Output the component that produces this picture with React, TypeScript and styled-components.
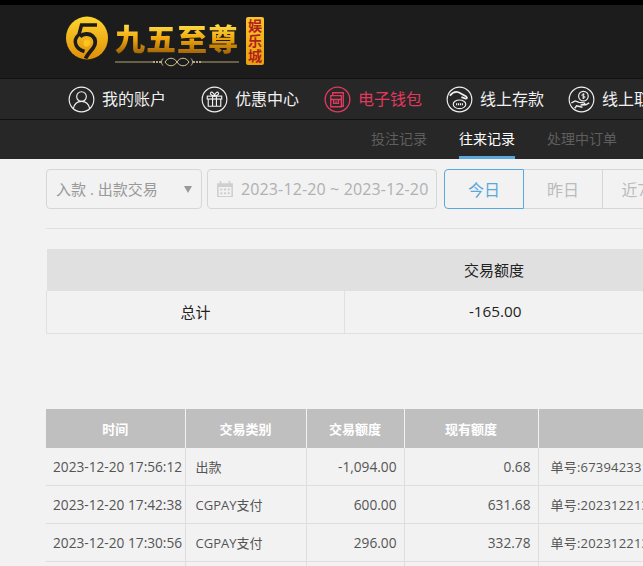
import styled, { createGlobalStyle } from "styled-components";

const GlobalStyle = createGlobalStyle`
  html, body {
    margin: 0;
    height: 566px;
    overflow: hidden;
    background: #f2f2f2;
  }
  body {
    font-family: "Open Sans", "Noto Sans CJK SC", sans-serif;
    font-size: 14px;
    color: #555;
  }
`;

const Page = styled.div`
  width: 643px;
  height: 566px;
  overflow: hidden;
`;

const TopBar = styled.header`
  height: 62px;
  border-top: 5px solid #000;
  background: #1c1c1c;
  display: flex;
  align-items: flex-start;
  padding: 11px 0 0 66px;
  gap: 7px;
`;

const LogoMark = styled.svg`
  width: 42px;
  height: 44px;
  flex: none;
`;

const LogoWords = styled.div`
  display: flex;
  flex-direction: column;
  width: 124px;
`;

const LogoTitle = styled.div`
  font-family: "Noto Sans CJK SC", sans-serif;
  font-weight: 900;
  font-size: 30px;
  line-height: 38px;
  letter-spacing: 1px;
  margin-top: 2px;
  white-space: nowrap;
  background: linear-gradient(#ffe14a 15%, #f0a50c 55%, #a86a08 90%);
  -webkit-background-clip: text;
  background-clip: text;
  color: transparent;
`;

const Flourish = styled.svg`
  width: 124px;
  height: 10px;
  margin-top: 1px;
`;

const LogoBadge = styled.div`
  box-sizing: border-box;
  width: 18px;
  height: 48px;
  margin-top: 1px;
  padding-top: 1px;
  border-radius: 2px;
  background: linear-gradient(#f7c62c, #e8a00e);
  color: #b3201c;
  font-family: "Noto Sans CJK SC", sans-serif;
  font-weight: 700;
  font-size: 14px;
  line-height: 15px;
  text-align: center;
`;

const MainNav = styled.nav`
  height: 40px;
  background: #272727;
  border-top: 1px solid #111;
  border-bottom: 1px solid #111;
  display: flex;
  align-items: center;
  padding-left: 68px;
  white-space: nowrap;
  overflow: hidden;
`;

const NavItem = styled.a<{ $active?: boolean; $after: number }>`
  flex: none;
  display: flex;
  align-items: center;
  gap: 7px;
  margin-right: ${({ $after }) => $after}px;
  font-size: 16px;
  line-height: 20px;
  color: ${({ $active }) => ($active ? "#e0395f" : "#f0f0f0")};
`;

const NavIcon = styled.svg`
  width: 27px;
  height: 27px;
  flex: none;
  fill: none;
  stroke: currentColor;
  stroke-width: 1.2;
`;

const SubNav = styled.nav`
  height: 39px;
  background: #272727;
  display: flex;
  justify-content: flex-start;
  padding-left: 371px;
  gap: 32px;
  white-space: nowrap;
`;

const SubItem = styled.a<{ $active?: boolean }>`
  flex: none;
  height: 36px;
  line-height: 37px;
  font-size: 14px;
  color: ${({ $active }) => ($active ? "#fff" : "#5e5e5e")};
  border-bottom: 3px solid ${({ $active }) => ($active ? "#5aa9dc" : "transparent")};
`;

const Content = styled.main`
  padding: 10px 0 0 46px;
  width: 700px;
`;

const Filters = styled.div`
  display: flex;
  height: 40px;
  padding-bottom: 19px;
  border-bottom: 1px solid #e0e0e0;
`;

const SelectBox = styled.div`
  box-sizing: border-box;
  width: 156px;
  border: 1px solid #d6d6d6;
  border-radius: 4px;
  display: flex;
  align-items: center;
  justify-content: space-between;
  padding: 0 9px 2px;
  font-size: 15px;
  color: #999;
`;

const Caret = styled.span`
  width: 0;
  height: 0;
  margin-top: 2px;
  border-left: 4px solid transparent;
  border-right: 4px solid transparent;
  border-top: 7px solid #999;
`;

const DateBox = styled.div`
  box-sizing: border-box;
  width: 230px;
  margin: 0 7px 0 5px;
  border: 1px solid #d6d6d6;
  border-radius: 4px;
  display: flex;
  align-items: center;
  gap: 7px;
  padding: 0 8px;
  font-size: 16px;
  letter-spacing: 0.13px;
  color: #b0b0b0;
  white-space: nowrap;
`;

const CalendarIcon = styled.svg`
  width: 18px;
  height: 18px;
  flex: none;
  fill: #cfcfcf;
`;

const RangeButton = styled.button<{ $active?: boolean }>`
  box-sizing: border-box;
  width: ${({ $active }) => ($active ? 80 : 79)}px;
  height: 40px;
  padding: 0;
  flex: none;
  font: inherit;
  font-size: 16px;
  background: transparent;
  color: ${({ $active }) => ($active ? "#5aa9dc" : "#bbb")};
  border: 1px solid ${({ $active }) => ($active ? "#5aa9dc" : "#d6d6d6")};
  border-left-width: ${({ $active }) => ($active ? 1 : 0)}px;
  border-radius: ${({ $active }) => ($active ? "4px 0 0 4px" : "0")};
`;

const SummaryTable = styled.table`
  width: 599px;
  margin-top: 20px;
  border-collapse: collapse;
  table-layout: fixed;
  color: #222;
`;

const SummaryHead = styled.th`
  height: 40px;
  padding: 0 2px 2px 0;
  background: #e0e0e0;
  font-weight: 400;
  font-size: 15px;
`;

const SummaryCell = styled.td`
  height: 40px;
  padding: 0 0 2px;
  text-align: center;
  border: 1px solid #e0e0e0;
  border-top: 0;
  border-right: 0;
  font-size: 15px;
`;

const SummaryAmount = styled(SummaryCell)`
  font-size: 15.3px;
`;

const RecordsTable = styled.table`
  width: 720px;
  margin-top: 75px;
  border-collapse: collapse;
  table-layout: fixed;
`;

const RecordsHead = styled.th`
  height: 39px;
  padding: 0;
  background: #bfbfbf;
  color: #fff;
  font-weight: 700;
  font-size: 13px;
  border-left: 1px solid #f2f2f2;
  &:first-child {
    border-left: 0;
  }
`;

const RecordsCell = styled.td`
  height: 37px;
  padding: 0 7px;
  font-size: 13.7px;
  white-space: nowrap;
  overflow: hidden;
  border-left: 1px solid #dedede;
  border-bottom: 1px solid #dedede;
  &:first-child {
    border-left: 0;
  }
`;

const KindCell = styled(RecordsCell)`
  padding-left: 10px;
  font-size: 13px;
`;

const AmountCell = styled(RecordsCell)`
  text-align: right;
`;

const NoteCell = styled(RecordsCell)`
  padding-left: 12px;
  font-size: 13px;
  letter-spacing: 0.2px;
`;

const records = [
  { time: "2023-12-20 17:56:12", kind: "出款", amount: "-1,094.00", balance: "0.68", note: "单号:673942331" },
  { time: "2023-12-20 17:42:38", kind: "CGPAY支付", amount: "600.00", balance: "631.68", note: "单号:202312213" },
  { time: "2023-12-20 17:30:56", kind: "CGPAY支付", amount: "296.00", balance: "332.78", note: "单号:202312213" },
  { time: "", kind: "", amount: "", balance: "", note: "" },
];

const AccountIcon = () => (
  <NavIcon viewBox="0 0 28 28">
    <circle cx="14" cy="14" r="12.8" />
    <circle cx="14" cy="11" r="5" />
    <path d="M5.5 23.5c1-5 4.5-7.6 8.5-7.6s7.500 2.600 8.500 7.600" />
  </NavIcon>
);

const GiftIcon = () => (
  <NavIcon viewBox="0 0 28 28">
    <circle cx="14" cy="14" r="12.800" />
    <rect x="6.500" y="10.500" width="15" height="3" />
    <path d="M7.500 13.500v7.500h13v-7.500M12 10.500V21M16 10.500V21" />
    <path d="M14 10.500c-3-.5-5-2-4-3.500s3.500 0 4 3.500c.5-3.500 3-5 4-3.500s-1 3-4 3.500z" />
  </NavIcon>
);

const WalletIcon = () => (
  <NavIcon viewBox="0 0 28 28" style={{ strokeWidth: 1.4 }}>
    <circle cx="14" cy="14" r="12.800" />
    <path d="M9 9.500V7h11v14h-2M7 10h11v11.500H7z" />
    <path d="M7 14h11M10 14v4h5v-4M12.500 15.500v1.500" />
  </NavIcon>
);

const DepositIcon = () => (
  <NavIcon viewBox="0 0 28 28">
    <circle cx="14" cy="14" r="12.800" />
    <path d="M4 10c3-3.500 6-4.500 9-3.500l8 4.500c1.500 1 .5 2.500-1 2l-4-1.500" strokeWidth="1.800" />
    <ellipse cx="14" cy="19" rx="6.500" ry="4.500" />
    <path d="M11 18v2M13 18v2M15 18v2M17 18v2" />
  </NavIcon>
);

const WithdrawIcon = () => (
  <NavIcon viewBox="0 0 28 28">
    <circle cx="14" cy="14" r="12.800" />
    <circle cx="16" cy="10.500" r="5" />
    <path d="M16 7.500v6M14.800 12.500h1.800a1 1 0 0 0 0-2h-1.200a1 1 0 0 1 0-2h1.800" strokeWidth="0.900" />
    <path d="M3.500 17.500l4-2 4 1.500 5 .5c1.500.5 1 2-.5 2l-3 .2 5.500-.2 3.500-2M7 23l2-2.500 6 1.500" strokeWidth="1.500" />
  </NavIcon>
);

export default function App() {
  return (
    <Page>
      <GlobalStyle />
      <TopBar>
        <LogoMark viewBox="0 0 42 44">
          <defs>
            <linearGradient id="coin" x1="0" y1="0" x2="0" y2="1">
              <stop offset="0" stopColor="#ffd52e" />
              <stop offset="1" stopColor="#e08f08" />
            </linearGradient>
          </defs>
          <ellipse cx="21" cy="22" rx="21" ry="21.500" fill="url(#coin)" />
          <path
            d="M31 9H15.500L13 18.500c-3.500 3-4.500 7-3 10.500 1.500 3.500 5 5.500 8.500 6.500"
            fill="none"
            stroke="#1c1c1c"
            strokeWidth="3.500"
          />
          <path
            d="M14 20.500c3.500-3 9-3.500 12.500-.5 3.500 3 3.500 8 1 11.500-2 3-5.500 6-8 11"
            fill="none"
            stroke="#1c1c1c"
            strokeWidth="3.800"
          />
          <path d="M21 23.500c2.500 0 4 2 3 4.500s-3.500 3.500-5.500 2-1.500-6.500 2.500-6.500z" fill="#ffc21f" />
        </LogoMark>
        <LogoWords>
          <LogoTitle>九五至尊</LogoTitle>
          <Flourish viewBox="0 0 124 10">
            <path d="M0 5h38M86 5h38" stroke="#d9c98a" strokeWidth="0.800" />
            <path d="M38 5h8M78 5h8" stroke="#e8dca8" strokeWidth="1.600" strokeDasharray="2 1" />
            <path
              d="M50 5c3-5 9-5 12 0s9 5 12 0c-3-5-9-5-12 0s-9 5-12 0z"
              fill="none"
              stroke="#e8dca8"
              strokeWidth="0.900"
            />
            <path d="M48 1.500c-2 2-2 5 0 7M76 1.500c2 2 2 5 0 7" fill="none" stroke="#e8dca8" strokeWidth="0.800" />
          </Flourish>
        </LogoWords>
        <LogoBadge>
          娱
          <br />
          乐
          <br />
          城
        </LogoBadge>
      </TopBar>
      <MainNav>
        <NavItem $after={35}>
          <AccountIcon />
          我的账户
        </NavItem>
        <NavItem $after={25}>
          <GiftIcon />
          优惠中心
        </NavItem>
        <NavItem $active $after={24}>
          <WalletIcon />
          电子钱包
        </NavItem>
        <NavItem $after={24}>
          <DepositIcon />
          线上存款
        </NavItem>
        <NavItem $after={24}>
          <WithdrawIcon />
          线上取款
        </NavItem>
      </MainNav>
      <SubNav>
        <SubItem>投注记录</SubItem>
        <SubItem $active>往来记录</SubItem>
        <SubItem>处理中订单</SubItem>
      </SubNav>
      <Content>
        <Filters>
          <SelectBox>
            入款 . 出款交易
            <Caret />
          </SelectBox>
          <DateBox>
            <CalendarIcon viewBox="0 0 17 17">
              <path d="M1 3h2.500V1h1.500v2h7V1h1.500v2H16v13H1zM2.500 6.500V15h12V6.500zM4 8h2v2H4zm3.500 0h2v2h-2zM11 8h2v2h-2zm-7 3.500h2v2H4zm3.500 0h2v2h-2zm3.500 0h2v2h-2z" />
            </CalendarIcon>
            2023-12-20 ~ 2023-12-20
          </DateBox>
          <RangeButton $active>今日</RangeButton>
          <RangeButton>昨日</RangeButton>
          <RangeButton>近7日</RangeButton>
        </Filters>
        <SummaryTable>
          <colgroup>
            <col width="298" />
            <col width="301" />
          </colgroup>
          <thead>
            <tr>
              <SummaryHead />
              <SummaryHead>交易额度</SummaryHead>
            </tr>
          </thead>
          <tbody>
            <tr>
              <SummaryCell>总计</SummaryCell>
              <SummaryAmount>-165.00</SummaryAmount>
            </tr>
          </tbody>
        </SummaryTable>
        <RecordsTable>
          <colgroup>
            <col width="139" />
            <col width="121" />
            <col width="98" />
            <col width="134" />
            <col width="228" />
          </colgroup>
          <thead>
            <tr>
              <RecordsHead>时间</RecordsHead>
              <RecordsHead>交易类别</RecordsHead>
              <RecordsHead>交易额度</RecordsHead>
              <RecordsHead>现有额度</RecordsHead>
              <RecordsHead />
            </tr>
          </thead>
          <tbody>
            {records.map((row, i) => (
              <tr key={i}>
                <RecordsCell>{row.time}</RecordsCell>
                <KindCell>{row.kind}</KindCell>
                <AmountCell>{row.amount}</AmountCell>
                <AmountCell>{row.balance}</AmountCell>
                <NoteCell>{row.note}</NoteCell>
              </tr>
            ))}
          </tbody>
        </RecordsTable>
      </Content>
    </Page>
  );
}
